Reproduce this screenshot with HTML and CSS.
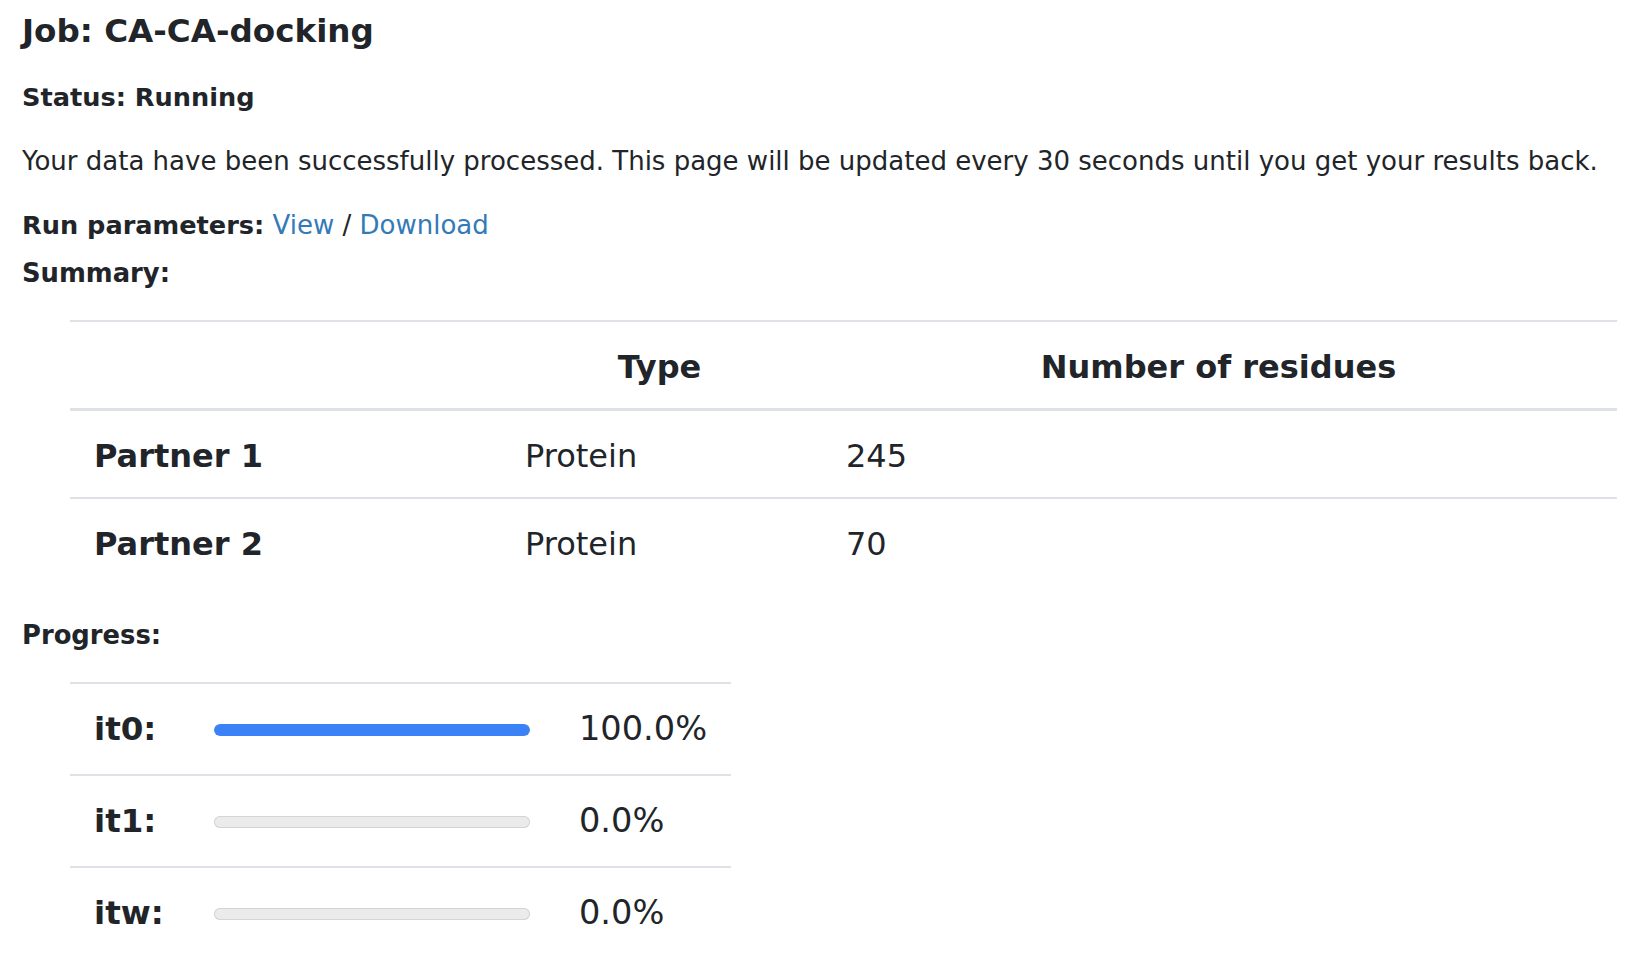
FILE: index.html
```html
<!DOCTYPE html>
<html lang="en">
<head>
<meta charset="utf-8">
<title>Job: CA-CA-docking</title>
<link rel="stylesheet" href="styles.css">
</head>
<body>
<div class="page">
  <h1 class="title">Job: CA-CA-docking</h1>
  <p class="status">Status: Running</p>
  <p class="msg">Your data have been successfully processed. This page will be updated every 30 seconds until you get your results back.</p>
  <p class="params"><b>Run parameters:</b> <a href="#" class="link">View</a> / <a href="#" class="link">Download</a></p>
  <p class="label">Summary:</p>
  <table class="summary">
    <colgroup>
      <col class="s-c1"><col class="s-c2"><col class="s-c3">
    </colgroup>
    <thead>
      <tr><th></th><th>Type</th><th>Number of residues</th></tr>
    </thead>
    <tbody>
      <tr><th>Partner 1</th><td>Protein</td><td>245</td></tr>
      <tr><th>Partner 2</th><td>Protein</td><td>70</td></tr>
    </tbody>
  </table>
  <p class="label progress-label">Progress:</p>
  <table class="progress">
    <colgroup>
      <col class="p-c1"><col class="p-c2"><col class="p-c3">
    </colgroup>
    <tbody>
      <tr>
        <th>it0:</th>
        <td><div class="bar"><div class="fill" style="width:100%"></div></div></td>
        <td class="pct">100.0%</td>
      </tr>
      <tr>
        <th>it1:</th>
        <td><div class="bar"><div class="fill" style="width:0%"></div></div></td>
        <td class="pct">0.0%</td>
      </tr>
      <tr>
        <th>itw:</th>
        <td><div class="bar"><div class="fill" style="width:0%"></div></div></td>
        <td class="pct">0.0%</td>
      </tr>
    </tbody>
  </table>
</div>
</body>
</html>
```
FILE: styles.css
```css
html, body {
  margin: 0;
  padding: 0;
  background: #ffffff;
}

body {
  color: #212529;
  font-family: "DejaVu Sans", Verdana, sans-serif;
}

.page {
  padding: 13px 33px 0 22px;
  font-size: 26px;
  line-height: 38.4px;
}

.title {
  font-size: 32.6px;
  line-height: 36px;
  font-weight: bold;
  margin: 0 0 28.6px;
}

.status {
  font-weight: bold;
  font-size: 25.6px;
  margin: 0 0 26px;
}

.msg {
  margin: 0 0 26px;
}

.params {
  margin: 0 0 9.4px;
}

.params b {
  font-size: 25.6px;
}

.link {
  color: #337ab7;
  text-decoration: none;
}

.label {
  font-weight: bold;
  font-size: 25.8px;
  margin: 0;
}

/* Summary table */
.summary {
  margin: 27.8px 0 30.4px 48px;
  width: 1547px;
  table-layout: fixed;
  border-collapse: separate;
  border-spacing: 0;
  font-size: 32px;
  line-height: 46px;
}

.s-c1 { width: 429px; }
.s-c2 { width: 321px; }
.s-c3 { width: 797px; }

.summary th,
.summary td {
  padding: 22px 26px 18px;
  text-align: left;
  vertical-align: middle;
  box-sizing: border-box;
}

.summary tbody th {
  padding-left: 24px;
}

.summary thead th {
  text-align: center;
  border-top: 2px solid #dee2e6;
  border-bottom: 3px solid #dee2e6;
}

.summary tbody th {
  font-weight: bold;
}

.summary td {
  font-weight: normal;
}

.summary tbody tr + tr > th,
.summary tbody tr + tr > td {
  border-top: 2px solid #dee2e6;
}

/* Progress table */
.progress {
  margin: 28.2px 0 0 48px;
  width: 661px;
  table-layout: fixed;
  border-collapse: separate;
  border-spacing: 0;
  font-size: 32.5px;
  line-height: 46px;
}

.p-c1 { width: 118px; }
.p-c2 { width: 368px; }
.p-c3 { width: 175px; }

.progress th,
.progress td {
  padding: 22px 26px;
  text-align: left;
  vertical-align: middle;
  border-top: 2px solid #dee2e6;
  box-sizing: border-box;
}

.progress th {
  font-weight: bold;
  padding-left: 24px;
}

.progress td {
  font-weight: normal;
}

.progress .pct {
  font-size: 33.6px;
  padding-left: 23px;
  padding-right: 0;
}

.bar {
  height: 12px;
  margin-top: 2px;
  border-radius: 6px;
  background: #ebebeb;
  box-shadow: inset 0 0 0 1px #d4d4d4;
  overflow: hidden;
}

.fill {
  height: 100%;
  background: #3b82f6;
  border-radius: 6px;
}
```
